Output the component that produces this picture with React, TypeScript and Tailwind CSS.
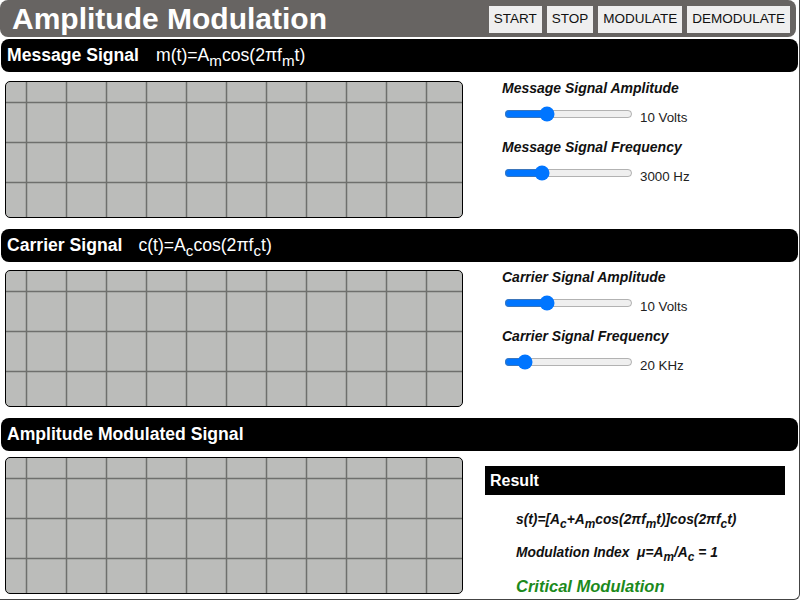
import React from "react";

const font = "font-['Liberation_Sans',Arial,sans-serif]";

const Sub = ({ children }: { children: React.ReactNode }) => (
  <span className="relative top-[0.32em] text-[0.86em] leading-none">{children}</span>
);

const Scope = () => {
  const xs = [20, 60, 100, 140, 180, 220, 260, 300, 340, 380, 420];
  const ys = [20, 60, 100];
  return (
    <div className="w-[458px] h-[137px] shrink-0 border border-black rounded-[5px] bg-[#bbbcba] overflow-hidden">
      <svg width="456" height="135" className="block">
        {xs.map((x) => (
          <line key={"x" + x} x1={x + 0.5} y1={0} x2={x + 0.5} y2={135} stroke="#6e6f6d" strokeWidth={1.5} />
        ))}
        {ys.map((y) => (
          <line key={"y" + y} x1={0} y1={y + 0.5} x2={456} y2={y + 0.5} stroke="#6e6f6d" strokeWidth={1.5} />
        ))}
      </svg>
    </div>
  );
};

const Bar = ({ children, className = "" }: { children: React.ReactNode; className?: string }) => (
  <div
    className={
      "mx-[1px] h-[33px] bg-black rounded-[8px] flex items-center pl-[6px] pb-[1px] text-white text-[17.6px] " + className
    }
  >
    {children}
  </div>
);

const Slider = ({ min, max, value, label }: { min: number; max: number; value: number; label: string }) => (
  <div className="flex items-start h-[20px]">
    <input type="range" min={min} max={max} defaultValue={value} className="w-[129px] h-[16px] m-[2px]" />
    <span className="ml-[5px] pt-[6px] text-[13.33px] leading-[16px] text-[#222]">{label}</span>
  </div>
);

const Label = ({ children, className = "" }: { children: React.ReactNode; className?: string }) => (
  <div className={"font-bold italic text-[14px] leading-[14px] text-[#111] " + className}>{children}</div>
);

type Ctl = { label: string; min: number; max: number; value: number; text: string };

const Controls = ({ a, f }: { a: Ctl; f: Ctl }) => (
  <div className="ml-[39px] flex flex-col">
    <Label>{a.label}</Label>
    <div className="mt-[9px]">
      <Slider min={a.min} max={a.max} value={a.value} label={a.text} />
    </div>
    <Label className="mt-[16px]">{f.label}</Label>
    <div className="mt-[9px]">
      <Slider min={f.min} max={f.max} value={f.value} label={f.text} />
    </div>
  </div>
);

export default function App() {
  return (
    <div className={"w-[800px] h-[600px] bg-white border-r border-b border-[#444] rounded-br-[6px] " + font}>
      {/* Header */}
      <div className="mr-[3px] h-[37px] bg-[#676462] rounded-[8px] flex items-center justify-between pl-[12px] pr-[6px]">
        <div className="text-white font-bold text-[30px] leading-none">Amplitude Modulation</div>
        <div className="flex gap-[5px] pt-[2px]">
          {["START", "STOP", "MODULATE", "DEMODULATE"].map((b) => (
            <button key={b} className="h-[27px] px-[5px] bg-[#efefef] text-[13.5px] text-[#111]">
              {b}
            </button>
          ))}
        </div>
      </div>

      {/* Message */}
      <Bar className="mt-[2px]">
        <span className="font-bold">Message Signal</span>
        <span className="ml-[17px]">
          m(t)=A<Sub>m</Sub>cos(2πf<Sub>m</Sub>t)
        </span>
      </Bar>
      <div className="flex mt-[9px] ml-[5px]">
        <Scope />
        <Controls
          a={{ label: "Message Signal Amplitude", min: 1, max: 30, value: 10, text: "10 Volts" }}
          f={{ label: "Message Signal Frequency", min: 500, max: 10000, value: 3000, text: "3000 Hz" }}
        />
      </div>

      {/* Carrier */}
      <Bar className="mt-[11px]">
        <span className="font-bold">Carrier Signal</span>
        <span className="ml-[16px]">
          c(t)=A<Sub>c</Sub>cos(2πf<Sub>c</Sub>t)
        </span>
      </Bar>
      <div className="flex mt-[8px] ml-[5px]">
        <Scope />
        <Controls
          a={{ label: "Carrier Signal Amplitude", min: 1, max: 30, value: 10, text: "10 Volts" }}
          f={{ label: "Carrier Signal Frequency", min: 10, max: 100, value: 20, text: "20 KHz" }}
        />
      </div>

      {/* AM */}
      <Bar className="mt-[11px] h-[32px]">
        <span className="font-bold">Amplitude Modulated Signal</span>
      </Bar>
      <div className="flex mt-[6px] ml-[5px]">
        <Scope />
        <div className="ml-[22px] flex flex-col">
          <div className="mt-[9px] w-[300px] h-[29px] bg-black flex items-center pl-[5px] text-white font-bold text-[16px]">
            Result
          </div>
          <div className="pl-[31px] font-bold italic text-[13.8px] text-[#111]">
            <div className="mt-[17px] leading-[16px]">
              s(t)=[A<Sub>c</Sub>+A<Sub>m</Sub>cos(2πf<Sub>m</Sub>t)]cos(2πf<Sub>c</Sub>t)
            </div>
            <div className="mt-[17px] leading-[16px]">
              Modulation Index&nbsp;&nbsp;μ=A<Sub>m</Sub>/A<Sub>c</Sub> = 1
            </div>
            <div className="mt-[15px] leading-[20px] text-[16.5px] text-[#1c8a1c]">Critical Modulation</div>
          </div>
        </div>
      </div>
    </div>
  );
}
